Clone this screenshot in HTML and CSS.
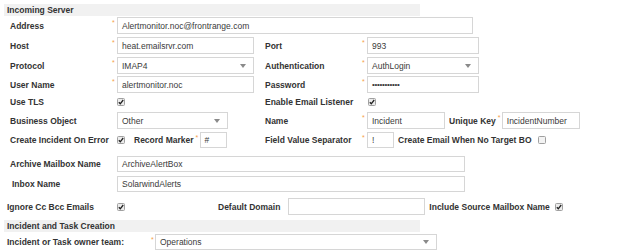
FILE: index.html
```html
<!DOCTYPE html>
<html>
<head>
<meta charset="utf-8">
<link rel="stylesheet" href="styles.css">
</head>
<body>
<div class="page">
  <div class="band">Incoming Server</div>

  <div class="row m1">
    <div class="lbl">Address</div><div class="req">*</div>
    <div class="fld span w356">Alertmonitor.noc@frontrange.com</div>
  </div>

  <div class="row m3">
    <div class="lbl">Host</div><div class="req">*</div>
    <div class="fld w137">heat.emailsrvr.com</div>
    <div class="lbl2">Port</div><div class="req">*</div>
    <div class="fld w112">993</div>
  </div>

  <div class="row m3">
    <div class="lbl">Protocol</div><div class="req">*</div>
    <div class="fld sel w137"><span>IMAP4</span><svg class="arrow" viewBox="0 0 6 4" width="6" height="4"><polygon points="0,0 6,0 3,4" fill="#8a8a8a"/></svg></div>
    <div class="lbl2">Authentication</div><div class="req">*</div>
    <div class="fld sel w112"><span>AuthLogin</span><svg class="arrow" viewBox="0 0 6 4" width="6" height="4"><polygon points="0,0 6,0 3,4" fill="#8a8a8a"/></svg></div>
  </div>

  <div class="row m2">
    <div class="lbl">User Name</div><div class="req">*</div>
    <div class="fld w137">alertmonitor.noc</div>
    <div class="lbl2">Password</div><div class="req">*</div>
    <div class="fld w112 pw">•••••••••••</div>
  </div>

  <div class="row m2 h14">
    <div class="lbl">Use TLS</div><div class="req"></div>
    <div class="cell"><svg class="cb" viewBox="0 0 8 8" width="8" height="8"><rect x="0.5" y="0.5" width="7" height="7" rx="1" fill="#ececec" stroke="#a0a0a0"/><path d="M1.8 4.2 L3.3 5.8 L6.2 2" fill="none" stroke="#222" stroke-width="1.3"/></svg></div>
    <div class="lbl2">Enable Email Listener</div><div class="req"></div>
    <div class="cell"><svg class="cb cb-r" viewBox="0 0 8 8" width="8" height="8"><rect x="0.5" y="0.5" width="7" height="7" rx="1" fill="#ececec" stroke="#a0a0a0"/><path d="M1.8 4.2 L3.3 5.8 L6.2 2" fill="none" stroke="#222" stroke-width="1.3"/></svg></div>
  </div>

  <div class="row m3">
    <div class="lbl">Business Object</div><div class="req"></div>
    <div class="fld sel w111"><span>Other</span><svg class="arrow" viewBox="0 0 6 4" width="6" height="4"><polygon points="0,0 6,0 3,4" fill="#8a8a8a"/></svg></div>
    <div class="lbl2">Name</div><div class="req">*</div>
    <div class="group">
      <div class="fld w78">Incident</div>
      <div class="lbl-in ml4">Unique Key</div><div class="req-in">*</div>
      <div class="fld w78">IncidentNumber</div>
    </div>
  </div>

  <div class="row m3 h16">
    <div class="lbl">Create Incident On Error</div><div class="req"></div>
    <div class="group">
      <svg class="cb" viewBox="0 0 8 8" width="8" height="8"><rect x="0.5" y="0.5" width="7" height="7" rx="1" fill="#ececec" stroke="#a0a0a0"/><path d="M1.8 4.2 L3.3 5.8 L6.2 2" fill="none" stroke="#222" stroke-width="1.3"/></svg>
      <div class="lbl-in ml9">Record Marker</div><div class="req-in">*</div>
      <div class="fld w27">#</div>
    </div>
    <div class="lbl2">Field Value Separator</div><div class="req">*</div>
    <div class="group">
      <div class="fld w27">!</div>
      <div class="lbl-in ml4">Create Email When No Target BO</div>
      <svg class="cb ml6" viewBox="0 0 8 8" width="8" height="8"><rect x="0.5" y="0.5" width="7" height="7" rx="1" fill="#f3f3f3" stroke="#a0a0a0"/></svg>
    </div>
  </div>

  <div class="row m8 h16">
    <div class="lbl">Archive Mailbox Name</div><div class="req"></div>
    <div class="fld span w348">ArchiveAlertBox</div>
  </div>

  <div class="row m4 h16">
    <div class="lbl lbl-inbox">Inbox Name</div><div class="req"></div>
    <div class="fld span w348">SolarwindAlerts</div>
  </div>

  <div class="line m6">
    <div class="lbl-wide">Ignore Cc Bcc Emails</div>
    <svg class="cb" viewBox="0 0 8 8" width="8" height="8"><rect x="0.5" y="0.5" width="7" height="7" rx="1" fill="#ececec" stroke="#a0a0a0"/><path d="M1.8 4.2 L3.3 5.8 L6.2 2" fill="none" stroke="#222" stroke-width="1.3"/></svg>
    <div class="lbl-in ml-dd">Default Domain</div>
    <div class="fld w137 ml8"></div>
    <div class="lbl-in ml4">Include Source Mailbox Name</div>
    <svg class="cb ml5" viewBox="0 0 8 8" width="8" height="8"><rect x="0.5" y="0.5" width="7" height="7" rx="1" fill="#ececec" stroke="#a0a0a0"/><path d="M1.8 4.2 L3.3 5.8 L6.2 2" fill="none" stroke="#222" stroke-width="1.3"/></svg>
  </div>

  <div class="band m5">Incident and Task Creation</div>

  <div class="line m2 h16">
    <div class="lbl-owner">Incident or Task owner team:</div><div class="req-in">*</div>
    <div class="fld sel w282"><span>Operations</span><svg class="arrow" viewBox="0 0 6 4" width="6" height="4"><polygon points="0,0 6,0 3,4" fill="#8a8a8a"/></svg></div>
  </div>
</div>
</body>
</html>
```

FILE: styles.css
```css
* { box-sizing: border-box; }

body {
  margin: 0;
  background: #ffffff;
  font-family: "Liberation Sans", Arial, sans-serif;
  font-size: 8.5px;
  color: #333333;
}

.page {
  padding: 4px 0 0 4px;
  display: flex;
  flex-direction: column;
}

.band {
  width: 416px;
  height: 12px;
  line-height: 12px;
  padding-left: 3px;
  background: #f1f1f1;
  font-weight: bold;
  color: #333;
}

.row {
  display: grid;
  grid-template-columns: 105px 5px 148px 97px 5px auto;
  align-items: center;
  height: 17px;
  padding-left: 3px;
}

.line {
  display: flex;
  align-items: center;
  height: 17px;
  padding-left: 3px;
}

.h14 { height: 14px; }
.h16 { height: 16px; }

.m1 { margin-top: 1px; }
.m2 { margin-top: 2px; }
.m3 { margin-top: 3px; }
.m4 { margin-top: 4px; }
.m5 { margin-top: 5px; }
.m6 { margin-top: 6px; }
.m8 { margin-top: 8px; }

.lbl {
  padding-left: 3px;
  font-weight: bold;
  white-space: nowrap;
}
.lbl-inbox { padding-left: 5px; }

.lbl2 {
  font-weight: bold;
  white-space: nowrap;
}

.lbl-in {
  font-weight: bold;
  white-space: nowrap;
}

.lbl-wide {
  width: 110px;
  font-weight: bold;
  white-space: nowrap;
}

.lbl-owner {
  width: 142px;
  font-weight: bold;
  white-space: nowrap;
}

.req, .req-in {
  align-self: flex-start;
  color: #f5a04a;
  font-size: 7px;
  line-height: 7px;
  padding-top: 2px;
}
.req { width: 5px; }
.req-in { width: 6px; padding-left: 2px; }

.cell, .group {
  display: flex;
  align-items: center;
  height: 100%;
}

.fld {
  display: flex;
  align-items: center;
  height: 100%;
  border: 1px solid #d6d6d6;
  background: #ffffff;
  padding: 0 4px;
  color: #3a3a3a;
  white-space: nowrap;
  overflow: hidden;
}

.sel { justify-content: space-between; padding-right: 7px; }
.arrow { flex: none; }

.pw { letter-spacing: -0.3px; font-size: 8px; }

.span { grid-column: 3 / -1; }

.w27 { width: 27px; }
.w78 { width: 78px; }
.w111 { width: 111px; }
.w112 { width: 112px; }
.w137 { width: 137px; }
.w282 { width: 282px; }
.w348 { width: 348px; }
.w356 { width: 356px; }

.cb { flex: none; display: block; }
.cb-r { margin-left: 1px; }

.ml4 { margin-left: 4px; }
.ml5 { margin-left: 5px; }
.ml6 { margin-left: 6px; }
.ml8 { margin-left: 8px; }
.ml9 { margin-left: 9px; }
.ml-dd { margin-left: 93px; }
```
